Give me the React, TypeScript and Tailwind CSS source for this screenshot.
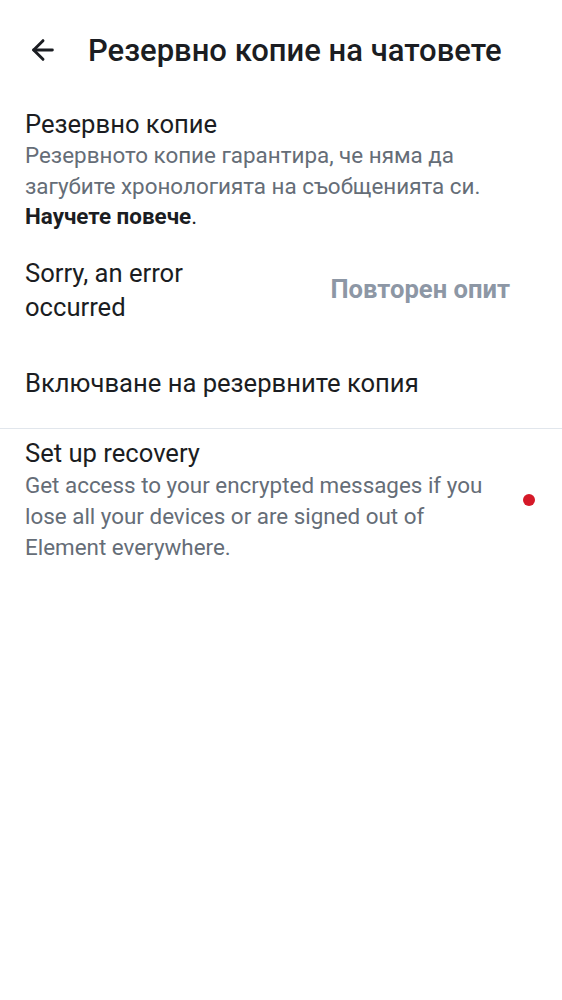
import { ArrowLeft } from 'lucide-react'

export default function App() {
  return (
    <div className="min-h-screen bg-white text-[#1b1d22]" style={{ fontFamily: 'Roboto, "Noto Sans", sans-serif' }}>
      {/* Top bar */}
      <div className="flex items-center h-[100px] pl-[27px]">
        <ArrowLeft size={32} strokeWidth={2.2} className="text-[#1b1d22]" />
        <h1 className="ml-[29px] text-[31px] leading-none font-medium">Резервно копие на чатовете</h1>
      </div>

      {/* Backup */}
      <div className="px-[25px] pt-[8px]">
        <div className="text-[25.6px] leading-[32px]">Резервно копие</div>
        <p className="text-[22.4px] leading-[30.5px] text-[#656d77]">
          Резервното копие гарантира, че няма да загубите хронологията на съобщенията си.{' '}
          <span className="block text-[#1b1d22]"><b className="font-bold">Научете повече</b>.</span>
        </p>
      </div>

      <div className="flex items-center pl-[25px] pr-[52px] pt-[24px]">
        <div className="flex-1 text-[25.6px] leading-[34px]">
          Sorry, an error<br />occurred
        </div>
        <button className="text-[25.6px] font-bold text-[#8d97a5]">Повторен опит</button>
      </div>

      <div className="px-[25px] h-[88px] flex items-center mt-[16px] text-[25.6px]">Включване на резервните копия</div>

      <div className="h-px bg-[#e1e6ec]" />

      {/* Recovery */}
      <div className="flex items-center pl-[25px] pr-[27px] pt-[8px]">
        <div className="flex-1">
          <div className="text-[25.6px] leading-[33px]">Set up recovery</div>
          <p className="text-[22.4px] leading-[31px] text-[#656d77]">
            Get access to your encrypted messages if you lose all your devices or are signed out of Element everywhere.
          </p>
        </div>
        <span className="ml-[20px] w-[12px] h-[12px] rounded-full bg-[#d51928]" />
      </div>
    </div>
  )
}
